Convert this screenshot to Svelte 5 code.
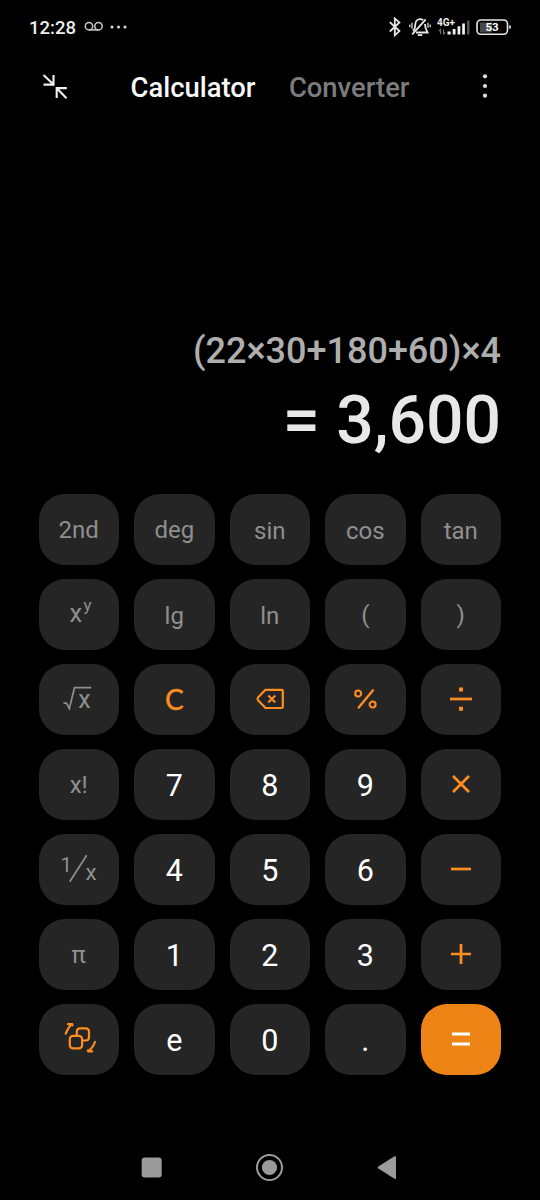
<script>
  const keys = [
    { label: '2nd', kind: 'fn' },
    { label: 'deg', kind: 'fn' },
    { label: 'sin', kind: 'fn low' },
    { label: 'cos', kind: 'fn low' },
    { label: 'tan', kind: 'fn low' },
    { icon: 'power', kind: 'fn' },
    { label: 'lg', kind: 'fn low' },
    { label: 'ln', kind: 'fn low' },
    { label: '(', kind: 'fn' },
    { label: ')', kind: 'fn' },
    { icon: 'root', kind: 'fn' },
    { label: 'C', kind: 'op clear' },
    { icon: 'delete', kind: 'op' },
    { icon: 'percent', kind: 'op' },
    { icon: 'divide', kind: 'op' },
    { label: 'x!', kind: 'fn' },
    { label: '7', kind: 'num' },
    { label: '8', kind: 'num' },
    { label: '9', kind: 'num' },
    { icon: 'times', kind: 'op' },
    { icon: 'inverse', kind: 'fn' },
    { label: '4', kind: 'num' },
    { label: '5', kind: 'num' },
    { label: '6', kind: 'num' },
    { icon: 'minus', kind: 'op' },
    { label: 'π', kind: 'fn' },
    { label: '1', kind: 'num' },
    { label: '2', kind: 'num' },
    { label: '3', kind: 'num' },
    { icon: 'plus', kind: 'op' },
    { icon: 'switch', kind: 'op' },
    { label: 'e', kind: 'num' },
    { label: '0', kind: 'num' },
    { label: '.', kind: 'num' },
    { icon: 'equals', kind: 'equals' }
  ];
  const expression = '(22×30+180+60)×4';
  const result = '= 3,600';
</script>

<div class="screen">
  <div class="status">
    <span class="time">12:28</span>
    <svg class="voicemail" width="20" height="12" viewBox="0 0 20 12">
      <circle cx="5" cy="5.2" r="3.7" />
      <circle cx="14.5" cy="5.2" r="3.7" />
      <path d="M5 8.9h9.5" />
    </svg>
    <svg class="more" width="18" height="4" viewBox="0 0 18 4">
      <circle cx="2" cy="2" r="1.5" />
      <circle cx="8.5" cy="2" r="1.5" />
      <circle cx="15" cy="2" r="1.5" />
    </svg>
    <svg class="signals" width="126" height="26" viewBox="386 14 126 26">
      <path class="line" stroke-width="1.8" d="M389.8 22.2l9.6 8.9-4.6 4.2V18.4l4.6 4.1-9.6 9" />
      <g class="line" stroke-width="1.8">
        <path d="M413 31.2c2-2 2.2-3.5 2.2-6 0-3.6 2-6.1 5-6.1 1.2 0 2.2.4 3 1" />
        <path d="M425 24c0 4 .8 5.6 2.5 8.5h-11.5" />
        <path d="M412.2 34.3l13.6-15" />
        <path d="M417.8 35.1h4.5" />
        <path d="M412 22.8v6M409.8 24.4v2.8M428 22.8v5M430.2 24.4v2.8" stroke-width="1.2" />
      </g>
      <text class="net" x="437" y="26" textLength="18">4G+</text>
      <path class="line dim" stroke-width="1.1" d="M440.5 34v-4.5l-1.7 1.7M443.5 29.5V34l1.7-1.7" />
      <path class="bars" d="M447.5 31.5h3.2v3h-3.2zM452.7 29h2.8v5.5h-2.8zM457.6 26.3h2.7v8.2h-2.7zM462.2 23.4h2.7v11.1h-2.7z" />
      <path class="weak" d="M467 20.5h2.5v14H467z" />
      <path class="charge" d="M480 22.5h12v10h-12z" />
      <rect class="line" x="477" y="20" width="30.5" height="14.3" rx="4" stroke-width="1.6" />
      <path class="line" stroke-width="1.7" d="M510 25.6v3" />
      <text class="percent" x="492" y="31.4">53</text>
    </svg>
  </div>

  <header>
    <svg width="28" height="28" viewBox="41 71 28 28">
      <path class="collapse" d="M43.5 74l10 9.6M43.5 83.6h10v-9.6M66.5 97.2l-9.7-9.9M66.8 87.1H56.7v9.8" />
    </svg>
    <nav>
      <span class="tab active">Calculator</span>
      <span class="tab">Converter</span>
    </nav>
    <svg class="menu" width="6" height="26" viewBox="0 0 6 26">
      <circle cx="3" cy="3.3" r="2.1" />
      <circle cx="3" cy="13" r="2.1" />
      <circle cx="3" cy="22.7" r="2.1" />
    </svg>
  </header>

  <main>
    <div class="expression">{expression}</div>
    <div class="result">{result}</div>
  </main>

  <div class="keypad">
    {#each keys as key}
      <button class="key {key.kind}">
        {#if key.label}
          <span>{key.label}</span>
        {:else}
          <svg width="40" height="40" viewBox="-20 -20 40 40">
            {#if key.icon === 'power'}
              <text x="-9.6" y="8.2" font-size="25.5">x</text>
              <text x="4.4" y="-2.6" font-size="17">y</text>
            {:else if key.icon === 'root'}
              <path stroke-width="1.7" d="M-15.5 4.2h3l2.8 5.5 5.2-21h16.7" />
              <text x="-.8" y="9" font-size="25">x</text>
            {:else if key.icon === 'inverse'}
              <text x="-18.5" y="2.6" font-size="20.5">1</text>
              <path stroke-width="1.7" d="M-9.3 12.8l17-26.5" />
              <text x="6.5" y="11.4" font-size="22.5">x</text>
            {:else if key.icon === 'delete'}
              <path stroke-width="2.2" stroke-linejoin="round" d="M-4.5-9.2h16q1.3 0 1.3 1.3V7.7q0 1.3-1.3 1.3h-16L-12 1.2q-1-1.3 0-2.6z" />
              <path stroke-width="2" d="M-1.7-3.5l7 7M5.3-3.5l-7 7" />
            {:else if key.icon === 'percent'}
              <circle cx="-6.8" cy="-5.5" r="3" stroke-width="2.1" />
              <circle cx="7.6" cy="5.5" r="3" stroke-width="2.1" />
              <path stroke-width="2.4" stroke-linecap="round" d="M-6.3 8.5L8-8.7" />
            {:else if key.icon === 'divide'}
              <path stroke-width="2.7" d="M-11 0h22" />
              <path stroke-width="4" d="M-2-9.5h4M-2 9.7h4" />
            {:else if key.icon === 'times'}
              <path stroke-width="2.7" d="M-8-8L8 8M8-8L-8 8" />
            {:else if key.icon === 'minus'}
              <path stroke-width="2.7" d="M-10 0h20" />
            {:else if key.icon === 'plus'}
              <path stroke-width="2.7" d="M-10 0h20M0-10v20" />
            {:else if key.icon === 'switch'}
              <g stroke-width="2.2" stroke-linecap="round" stroke-linejoin="round">
                <rect x="-9.2" y="-3.2" width="12.3" height="12.6" rx="3.2" />
                <path d="M-2.2-3.3v-3.9q0-3.4 3.4-3.4h5.4q3.4 0 3.4 3.4V-1.9q0 3.4-3.4 3.4H3.5" />
                <path d="M-13.3-5.3q1.7-5 5.3-8.9M-11-14.8l4.2-.2 .2 1.3" />
                <path d="M16 3q-1.5 4.8-5.8 8.7M9 11.3v1h4.3" />
              </g>
            {:else}
              <path stroke-width="3" d="M-9-5.1H9M-9 5.1H9" />
            {/if}
          </svg>
        {/if}
      </button>
    {/each}
  </div>

  <footer>
    <svg width="280" height="40" viewBox="130 1148 280 40">
      <rect x="141.7" y="1157.5" width="20" height="20" rx="3.2" />
      <circle class="ring" cx="269.5" cy="1167.5" r="12.5" />
      <circle cx="269.5" cy="1167.5" r="7.6" />
      <path d="M378.3 1166.5L394.5 1156.3Q396 1155.8 396 1157.2V1178Q396 1179.2 394.5 1178.8L378.3 1168.5Q377 1167.5 378.3 1166.5z" />
    </svg>
  </footer>
</div>

<style>
  :global(body) {
    background: #000;
  }
  .screen {
    width: 540px;
    height: 1200px;
    display: flex;
    flex-direction: column;
    background: #000;
    color: #fff;
    font-family: Roboto, sans-serif;
    overflow: hidden;
  }
  .status {
    height: 54px;
    display: flex;
    align-items: center;
    padding: 0 28px 0 29px;
  }
  .time {
    padding-top: 1px;
    font-size: 18.5px;
    font-weight: 500;
    color: #eee;
  }
  .voicemail {
    margin-left: 8px;
    fill: none;
    stroke: #ccc;
    stroke-width: 1.5;
  }
  .more {
    margin-left: 6px;
    fill: #ddd;
  }
  .signals {
    margin-left: auto;
  }
  .line {
    fill: none;
    stroke: #e8e8e8;
  }
  .dim {
    stroke: #777;
  }
  .bars {
    fill: #f2f2f2;
  }
  .weak {
    fill: #555;
  }
  .charge {
    fill: #484848;
  }
  .net {
    fill: #eee;
    font-size: 10px;
    font-weight: 700;
  }
  .percent {
    fill: #fff;
    font-size: 11.5px;
    font-weight: 700;
    text-anchor: middle;
  }

  header {
    height: 66px;
    box-sizing: border-box;
    display: flex;
    align-items: center;
    padding: 0 52px 3px 41px;
  }
  .collapse {
    fill: none;
    stroke: #eee;
    stroke-width: 2.1;
  }
  nav {
    display: flex;
    gap: 33.5px;
    padding-top: 4px;
    margin-left: 61.5px;
  }
  .tab {
    font-size: 27.4px;
    font-weight: 500;
    color: #7c7c7c;
  }
  .active {
    color: #f8f8f8;
  }
  .menu {
    margin-left: auto;
    fill: #ddd;
  }

  main {
    height: 374px;
    box-sizing: border-box;
    display: flex;
    flex-direction: column;
    justify-content: flex-end;
    align-items: flex-end;
    padding: 0 39px 26px 0;
    font-weight: 500;
    white-space: nowrap;
  }
  .expression {
    font-size: 36px;
    line-height: 45px;
    color: #aeaeae;
  }
  .result {
    font-size: 66px;
    line-height: 94px;
    color: #e8e8e8;
  }

  .keypad {
    display: grid;
    grid-template-columns: repeat(5, 80.5px);
    grid-auto-rows: 70.5px;
    gap: 14.5px 15px;
    padding-left: 38.5px;
  }
  .key {
    display: flex;
    align-items: center;
    justify-content: center;
    padding: 0;
    border: 0;
    border-radius: 26px;
    background: #252525;
    font-family: inherit;
  }
  .key svg {
    margin-bottom: 1px;
    fill: none;
    stroke: currentColor;
    overflow: visible;
  }
  .key text {
    fill: currentColor;
    stroke: none;
  }
  .fn {
    color: #8f8f8f;
    font-size: 24px;
  }
  .fn span {
    padding-top: 1.5px;
  }
  .low span {
    padding-top: 3.5px;
  }
  .op {
    color: #ff8d1f;
  }
  .clear {
    padding-bottom: 1px;
    font-family: Lato, sans-serif;
    font-size: 28px;
    -webkit-text-stroke: 0.4px;
  }
  .num {
    color: #fff;
    font-size: 30.5px;
    padding-top: 3px;
  }
  .equals {
    background: #ee8316;
    color: #fff;
  }

  footer {
    flex: 1;
    display: flex;
    align-items: flex-end;
    justify-content: center;
    padding-bottom: 12px;
  }
  footer svg {
    fill: #9b9b9b;
  }
  .ring {
    fill: none;
    stroke: #9b9b9b;
    stroke-width: 2;
  }
</style>
